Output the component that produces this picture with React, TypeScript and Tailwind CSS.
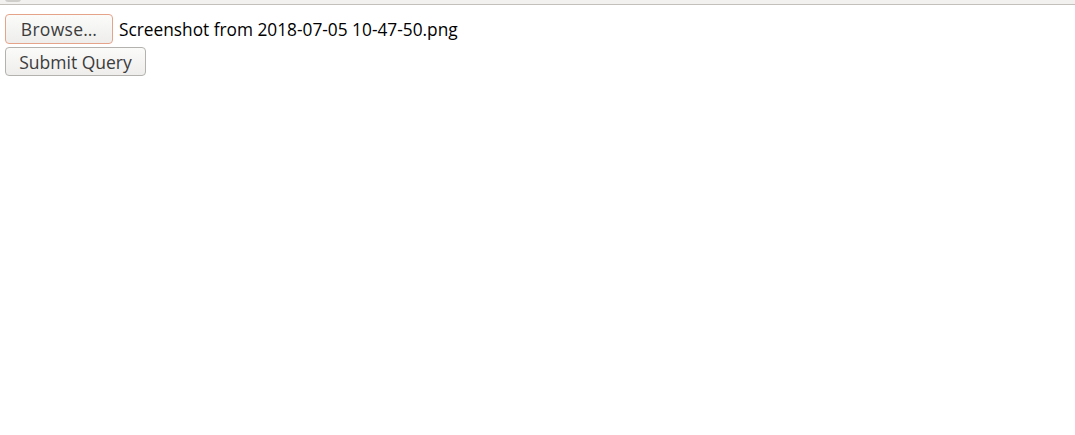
export default function App() {
  const font = { fontFamily: '"Open Sans", "Noto Sans", sans-serif' };
  return (
    <div className="w-[1075px] h-[435px] bg-white overflow-hidden" style={font}>
      <div className="h-[5px] bg-[#f2f1f0] border-b border-[#c3c0bc] relative">
        <div className="absolute left-[5px] top-[-4px] w-[16px] h-[6px] rounded-full bg-[#d0cecb]" />
      </div>
      <div className="pl-[5px] pt-[9px] flex flex-col gap-[3px]">
        <div className="flex items-center gap-[6px]">
          <button className="h-[30px] w-[108px] pt-[2px] rounded-[4px] border border-[#e5a48a] bg-gradient-to-b from-[#fbfbfa] to-[#eeedec] text-[#3c3c3c] text-[17.5px] tracking-[0.3px] leading-none">
            Browse…
          </button>
          <span className="pt-[2px] text-[17.3px] text-black leading-none">Screenshot from 2018-07-05 10-47-50.png</span>
        </div>
        <div>
          <button className="h-[29px] w-[141px] pt-[2px] rounded-[4px] border border-[#b4b2ae] bg-gradient-to-b from-[#fbfbfa] to-[#eeedec] text-[#3c3c3c] text-[17.5px] leading-none">
            Submit Query
          </button>
        </div>
      </div>
    </div>
  );
}
